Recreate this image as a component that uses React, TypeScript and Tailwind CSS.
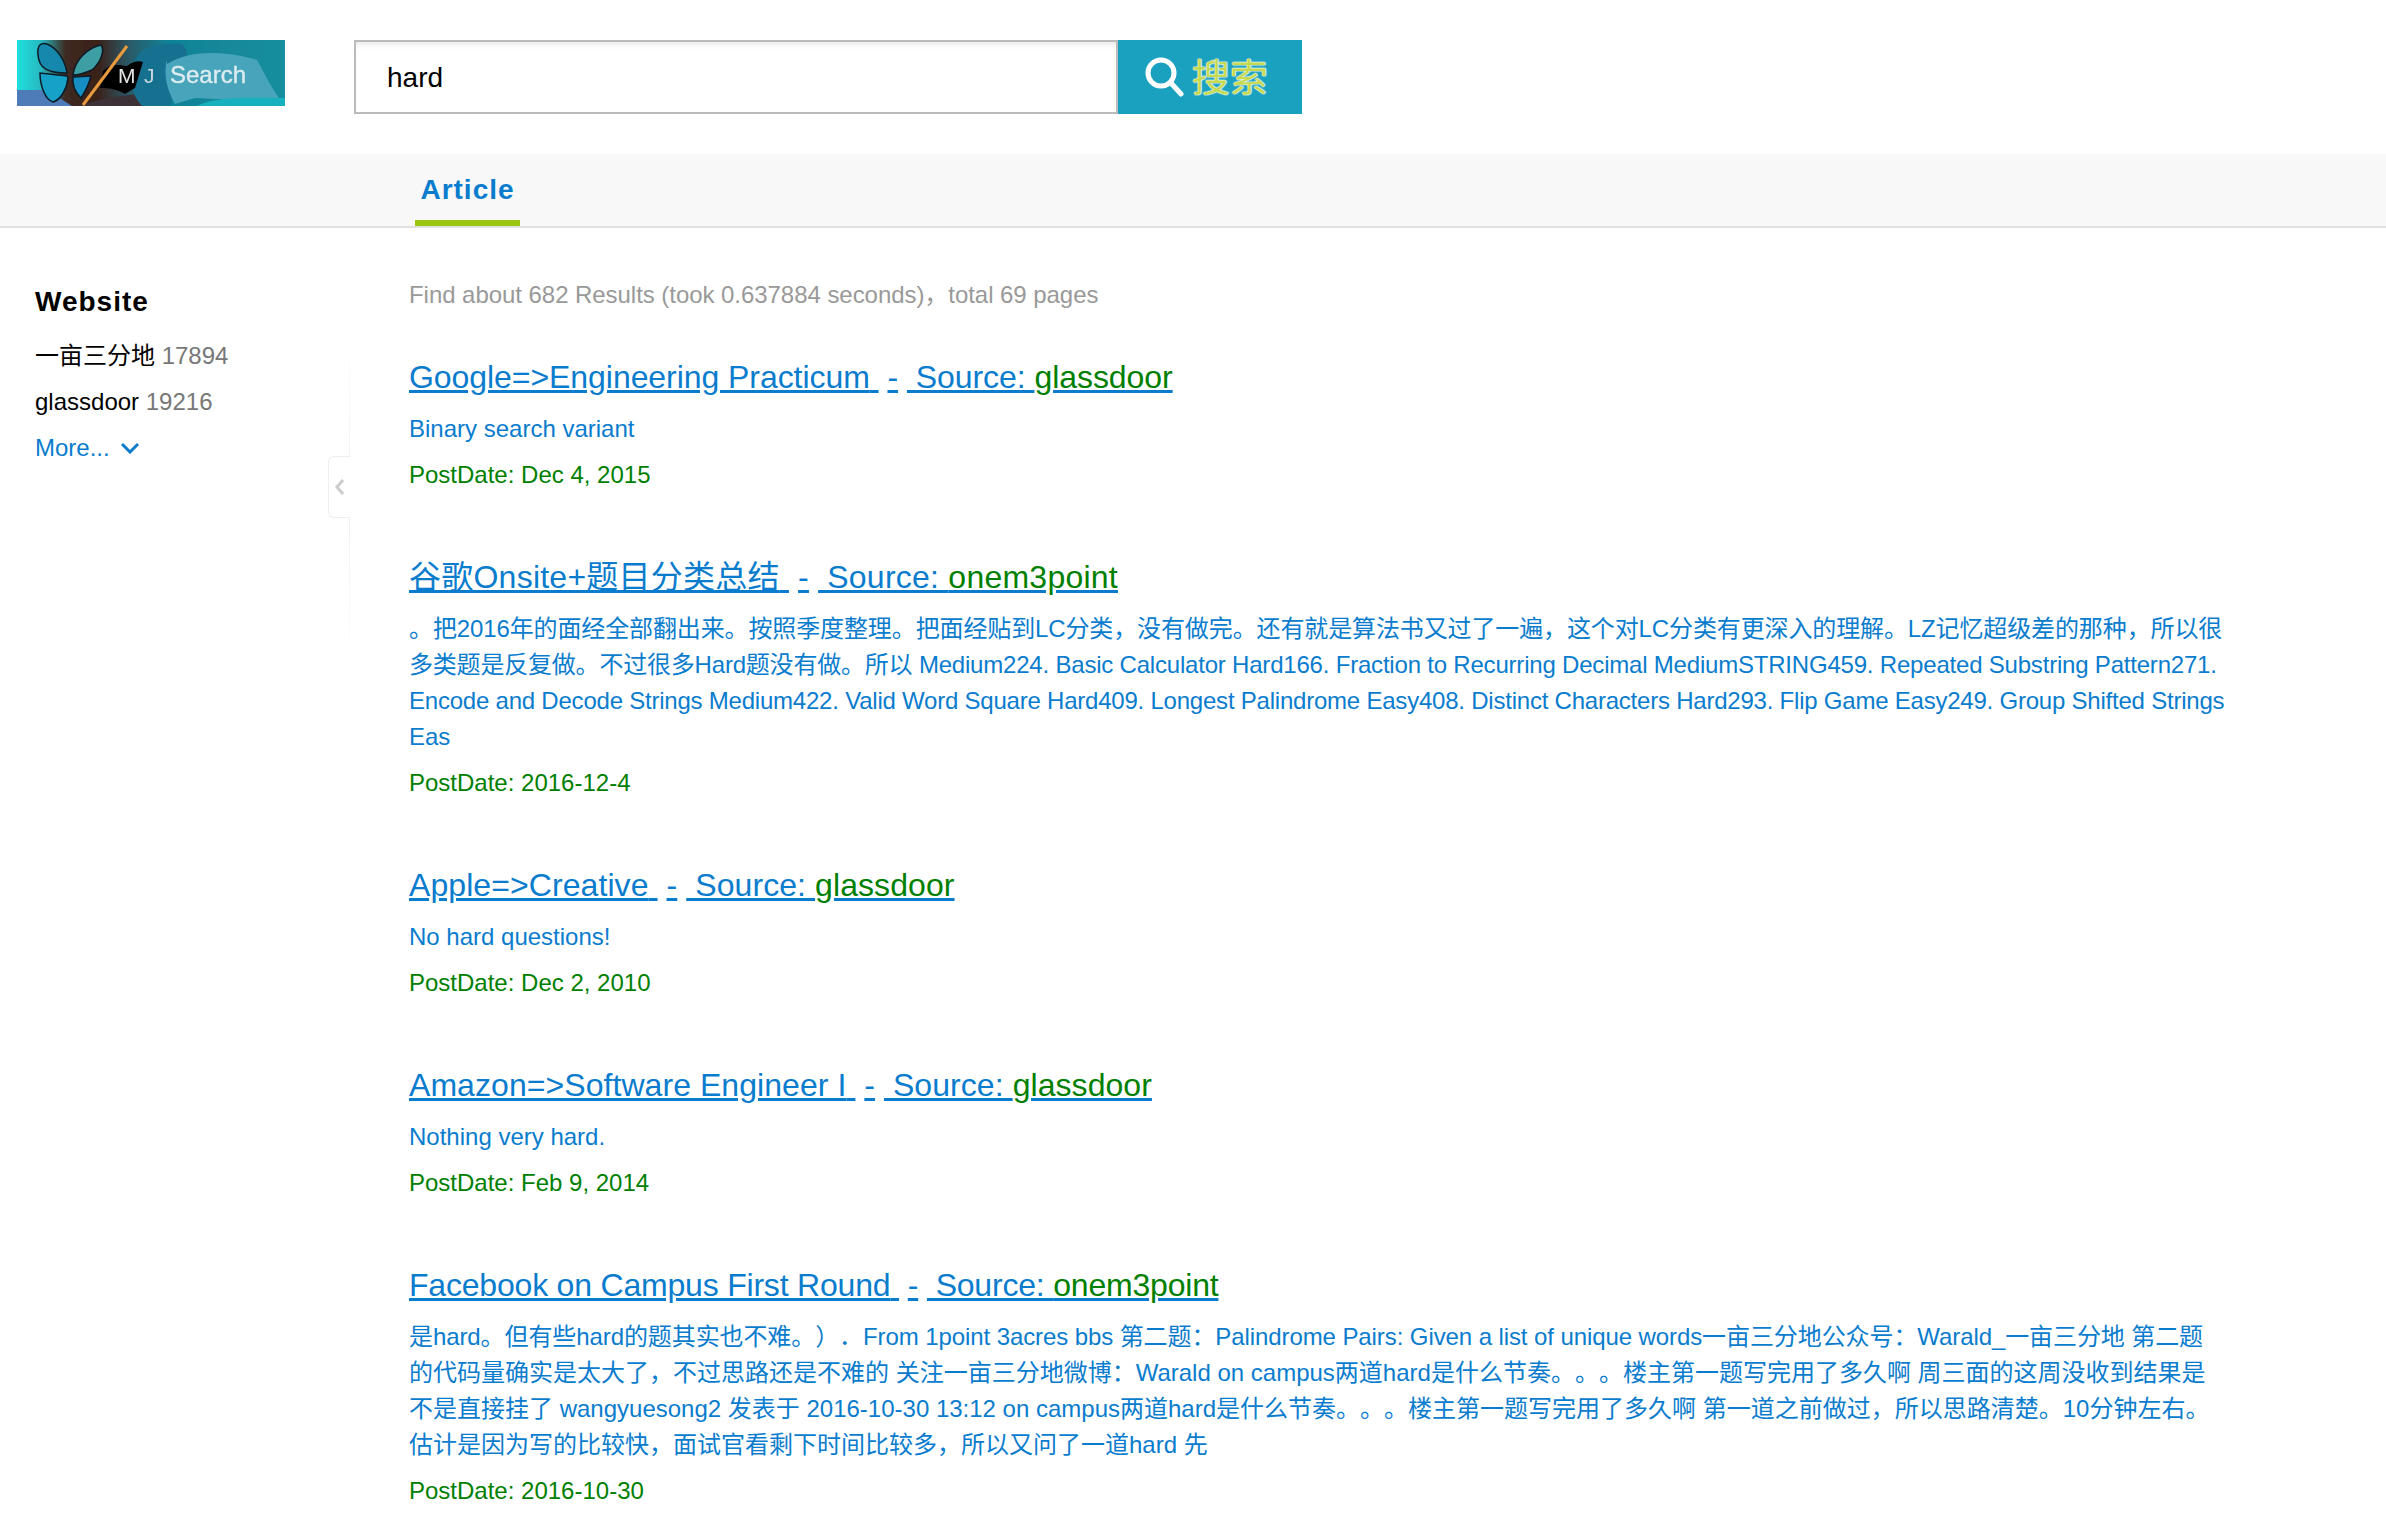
import React from 'react';

const fontStack = '"Liberation Sans", "Noto Sans CJK SC", sans-serif';

function Logo() {
  return (
    <svg width="268" height="66" viewBox="0 0 268 66" className="block shrink-0">
      <defs>
        <linearGradient id="bg" x1="0" x2="1" y1="0" y2="0">
          <stop offset="0" stopColor="#1fe0de" />
          <stop offset="0.09" stopColor="#27b8c0" />
          <stop offset="0.18" stopColor="#3d2a22" />
          <stop offset="0.3" stopColor="#3a2018" />
          <stop offset="0.42" stopColor="#2a5a68" />
          <stop offset="0.56" stopColor="#118296" />
          <stop offset="1" stopColor="#138e9e" />
        </linearGradient>
        <filter id="soft" x="0" y="0" width="100%" height="100%">
          <feGaussianBlur stdDeviation="0.7" />
        </filter>
        <clipPath id="frame">
          <rect width="268" height="66" />
        </clipPath>
      </defs>
      <g clipPath="url(#frame)">
        <g filter="url(#soft)">
          <rect width="268" height="66" fill="url(#bg)" />
          <path d="M0 66V50h30l25 16z" fill="#4d7cb8" />
          <path d="M60 66l30-8 30-4 10 12z" fill="#3d3038" />
          <path d="M115 30C118 8 135 2 165 4c8 8 5 14 0 18l-12 44h-28C115 55 112 42 115 30z" fill="#13708f" />
          <path d="M150 24C175 8 215 12 240 20c8 14 15 30 28 46h-70l20-6-40-2-20 6c-8-14-12-30-8-44z" fill="#47a4ba" />
          <path d="M180 66c20-10 50-8 88-8v8z" fill="#18b0bf" />
          <path d="M86 31c8-8 14-6 24-5 5-4 11-6 16-4l-8 26-10 6c-8-5-16-6-25-6z" fill="#040404" />
          <path d="M50 33C30 33 22 28 21 15 20 5 24 2 30 4 40 8 48 20 50 33z" fill="#1488ae" stroke="#0b1c26" strokeWidth="1.5" />
          <path d="M50 36L23 33C23 45 28 60 36 62 44 60 50 48 51 38z" fill="#14a2c8" stroke="#0b1c26" strokeWidth="1.5" />
          <path d="M56 35C58 20 70 8 84 5 88 10 84 22 75 30 68 33 60 35 56 35z" fill="#3d9ea4" stroke="#0b1c26" strokeWidth="1.5" />
          <path d="M56 37L74 36C72 44 68 52 64 58 58 52 55 45 56 37z" fill="#178ec4" stroke="#0b1c26" strokeWidth="1.5" />
          <line x1="110" y1="6" x2="66" y2="65" stroke="#e89a3c" strokeWidth="3" />
          <text x="101" y="43" fontFamily="'Liberation Sans', sans-serif" fontSize="21" fill="#e4e4e4">M</text>
          <text x="127" y="43" fontFamily="'Liberation Sans', sans-serif" fontSize="21" fill="#c8d8dc">J</text>
          <text x="153" y="43" fontFamily="'Liberation Sans', sans-serif" fontSize="24" fill="#dcecf0" stroke="#dcecf0" strokeWidth="0.4">Search</text>
        </g>
      </g>
    </svg>
  );
}

function SearchBar() {
  return (
    <div className="flex h-[74px] w-[948px]">
      <div className="flex flex-1 items-center border-2 border-[#bbbbbb] pl-[31px] pt-[2px] text-[28px] text-black shadow-[inset_0_6px_6px_-4px_rgba(0,0,0,0.1)]">
        hard
      </div>
      <button className="flex w-[184px] items-center gap-[7px] bg-[#1aa1bf] pl-[27px]">
        <svg width="40" height="40" viewBox="0 0 40 40" fill="none" stroke="#ffffff" strokeWidth="5" strokeLinecap="round">
          <circle cx="16" cy="16" r="13" />
          <line x1="26" y1="26" x2="36" y2="37" />
        </svg>
        <span className="pt-[2px] text-[38px] leading-none text-[#c4da50] [text-shadow:0_0_1px_#ffffff,0_0_1px_#ffffff,0_0_1px_#ffffff,0_0_2px_#ffffff]">
          搜索
        </span>
      </button>
    </div>
  );
}

type Result = {
  title: string;
  titleTracking?: string;
  source: string;
  lines: { text: string; tracking?: string }[];
  date: string;
};

const results: Result[] = [
  {
    title: 'Google=>Engineering Practicum',
    titleTracking: 'tracking-[-0.06px]',
    source: 'glassdoor',
    lines: [{ text: 'Binary search variant' }],
    date: 'Dec 4, 2015',
  },
  {
    title: '谷歌Onsite+题目分类总结',
    titleTracking: 'tracking-[0.24px]',
    source: 'onem3point',
    lines: [
      {
        text: '。把2016年的面经全部翻出来。按照季度整理。把面经贴到LC分类，没有做完。还有就是算法书又过了一遍，这个对LC分类有更深入的理解。LZ记忆超级差的那种，所以很',
        tracking: 'tracking-[-0.12px]',
      },
      {
        text: '多类题是反复做。不过很多Hard题没有做。所以 Medium224. Basic Calculator Hard166. Fraction to Recurring Decimal MediumSTRING459. Repeated Substring Pattern271.',
        tracking: 'tracking-[-0.2px]',
      },
      {
        text: 'Encode and Decode Strings Medium422. Valid Word Square Hard409. Longest Palindrome Easy408. Distinct Characters Hard293. Flip Game Easy249. Group Shifted Strings',
        tracking: 'tracking-[-0.22px]',
      },
      { text: 'Eas' },
    ],
    date: '2016-12-4',
  },
  {
    title: 'Apple=>Creative',
    titleTracking: 'tracking-[0.08px]',
    source: 'glassdoor',
    lines: [{ text: 'No hard questions!' }],
    date: 'Dec 2, 2010',
  },
  {
    title: 'Amazon=>Software Engineer I',
    titleTracking: 'tracking-[0.06px]',
    source: 'glassdoor',
    lines: [{ text: 'Nothing very hard.' }],
    date: 'Feb 9, 2014',
  },
  {
    title: 'Facebook on Campus First Round',
    titleTracking: 'tracking-[-0.2px]',
    source: 'onem3point',
    lines: [
      {
        text: '是hard。但有些hard的题其实也不难。）．From 1point 3acres bbs 第二题：Palindrome Pairs: Given a list of unique words一亩三分地公众号：Warald_一亩三分地 第二题',
        tracking: 'tracking-[-0.09px]',
      },
      {
        text: '的代码量确实是太大了，不过思路还是不难的 关注一亩三分地微博：Warald on campus两道hard是什么节奏。。。楼主第一题写完用了多久啊 周三面的这周没收到结果是',
      },
      {
        text: '不是直接挂了 wangyuesong2 发表于 2016-10-30 13:12 on campus两道hard是什么节奏。。。楼主第一题写完用了多久啊 第一道之前做过，所以思路清楚。10分钟左右。',
      },
      { text: '估计是因为写的比较快，面试官看剩下时间比较多，所以又问了一道hard 先' },
    ],
    date: '2016-10-30',
  },
];

function ResultItem({ item }: { item: Result }) {
  return (
    <div className="mb-[60px]">
      <div className={`whitespace-pre text-[32px] leading-[48px] text-[#0a7cce] ${item.titleTracking ?? ''}`}>
        <a className="underline">{item.title} </a> <a className="underline">-</a>{' '}
        <a className="underline">
          {' Source: '}
          <span className="text-[#008000]">{item.source}</span>
        </a>
      </div>
      <div className="mt-[10px] text-[24px] leading-[36px] text-[#0a7cce] [text-spacing-trim:space-all]">
        {item.lines.map((line) => (
          <div key={line.text} className={`whitespace-nowrap ${line.tracking ?? ''}`}>
            {line.text}
          </div>
        ))}
      </div>
      <div className="mt-[10px] text-[24px] leading-[36px] text-[#008000]">PostDate: {item.date}</div>
    </div>
  );
}

export default function App() {
  return (
    <div className="min-h-[1540px] overflow-hidden bg-white" style={{ fontFamily: fontStack }}>
      <div className="flex h-[154px] items-start pl-[17px] pt-[40px]">
        <Logo />
        <div className="ml-[69px]">
          <SearchBar />
        </div>
      </div>

      <div className="h-[74px] border-b-2 border-[#e0e0e0] bg-[#f8f8f8] pl-[415px]">
        <div className="flex h-[72px] w-[105px] items-center justify-center border-b-[6px] border-[#9bc60f] pt-[6px] text-[28px] font-bold tracking-[1px] text-[#0a7cce]">
          Article
        </div>
      </div>

      <div className="flex">
        <aside className="relative h-[500px] w-[350px] shrink-0 pl-[35px] pt-[51px]">
          <div className="text-[28px] font-bold leading-[46px] tracking-[1px] text-black">Website</div>
          <div className="mt-[8px] text-[24px] leading-[46px]">
            <div>
              <span className="text-black">一亩三分地</span> <span className="text-[#777777]">17894</span>
            </div>
            <div>
              <span className="text-black">glassdoor</span> <span className="text-[#777777]">19216</span>
            </div>
            <div className="flex items-center gap-[11px] text-[#0a7cce]">
              More...
              <svg width="18" height="12" viewBox="0 0 18 12" fill="none" stroke="#0a7cce" strokeWidth="3">
                <path d="M1 2l8 8 8-8" />
              </svg>
            </div>
          </div>
          <div className="absolute right-0 top-[100px] h-[340px] w-px bg-gradient-to-b from-white via-[#eeeeee] to-white" />
          <div className="absolute right-0 top-[228px] flex h-[62px] w-[22px] items-center justify-center rounded-l-[6px] border border-r-0 border-[#eeeeee] bg-white">
            <svg width="10" height="18" viewBox="0 0 10 18" fill="none" stroke="#cccccc" strokeWidth="3">
              <path d="M8 2L2 9l6 7" />
            </svg>
          </div>
        </aside>

        <main className="min-w-0 flex-1 pl-[59px] pt-[49px]">
          <div className="mb-[40px] text-[24px] leading-[36px] tracking-[-0.05px] text-[#999999]">
            Find about 682 Results (took 0.637884 seconds)，total 69 pages
          </div>
          {results.map((item) => (
            <ResultItem key={item.title} item={item} />
          ))}
        </main>
      </div>
    </div>
  );
}
